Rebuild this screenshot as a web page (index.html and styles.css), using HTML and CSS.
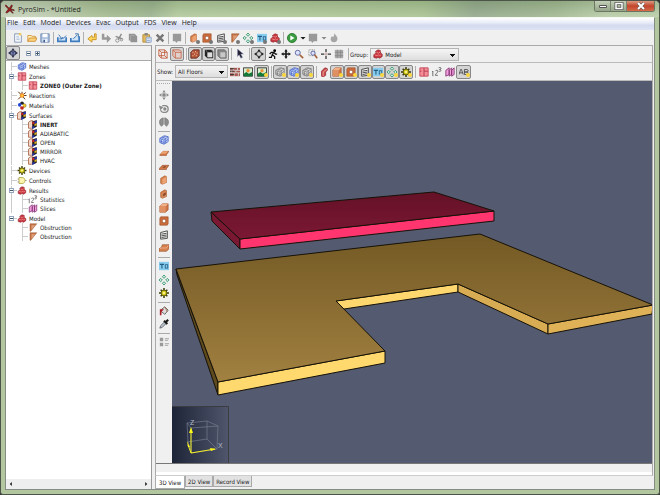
FILE: index.html
```html
<!DOCTYPE html>
<html lang="en">
<head>
  <meta charset="UTF-8" />
  <title>PyroSim - *Untitled</title>
  <meta name="viewport" content="width=device-width, initial-scale=1.0" />
  <link rel="stylesheet" href="styles.css">
</head>
<body>

<!-- Icon set -->
<svg class="icon-defs" aria-hidden="true">
  <symbol id="new" viewBox="0 0 12 12"><path d="M2 1h6l2 2v8H2z" fill="#fdfdfd" stroke="#7389ad"/><path d="M4 4h3M4 6h4M4 8h4" stroke="#9fb4d4"/><path d="M7 0h3v3H7z" fill="#f0c860"/></symbol>
  <symbol id="open" viewBox="0 0 12 12"><path d="M1 10V3h4l1 1h4v2" fill="#fff0bd" stroke="#d09030"/><path d="M1 10l2-4h9l-2 4z" fill="#f8d480" stroke="#d08a28"/></symbol>
  <symbol id="save" viewBox="0 0 12 12"><path d="M1 1h10v10H1z" fill="#a9bfdf" stroke="#6580a8"/><path d="M3 1h6v4H3z" fill="#fff"/><path d="M3 7h6v4H3z" fill="#e8eef8"/><path d="M4 8h2v3H4z" fill="#3d6091"/></symbol>
  <symbol id="import" viewBox="0 0 12 12"><path d="M1 5v5h10V5" fill="#cfe3f7" stroke="#3f7cbd" stroke-width="2"/><path d="M2 2l4 5 1-2M6 7H3M7 7l4-4" stroke="#2563a8" fill="none"/></symbol>
  <symbol id="export" viewBox="0 0 12 12"><path d="M1 6v4h10V4" fill="#cfe3f7" stroke="#3f7cbd" stroke-width="2"/><path d="M4 7l5-5M6 1h4v4" stroke="#2563a8" fill="none"/></symbol>
  <symbol id="undo" viewBox="0 0 12 12"><path d="M1 7l5-4v2h3V1h2v7H6v3z" fill="#ffd75e" stroke="#c48a18"/></symbol>
  <symbol id="redo" viewBox="0 0 12 12"><path d="M12 7L7 2v3H4V1H1v7h6v4z" fill="#999"/></symbol>
  <symbol id="cut" viewBox="0 0 12 12"><path d="M9 1L5 8M2 4l8 3" stroke="#888" stroke-width="1.5"/><circle cx="4" cy="9" r="2" fill="none" stroke="#888"/><circle cx="9" cy="8" r="1.5" fill="none" stroke="#888"/></symbol>
  <symbol id="copy" viewBox="0 0 12 12"><path d="M1 1h7l3 3v7H3V9H1z" fill="#939393"/><path d="M3 9V3h5" fill="none" stroke="#aaa"/></symbol>
  <symbol id="paste" viewBox="0 0 12 12"><path d="M1 2h8v9H1z" fill="#e4b95e" stroke="#b78a36"/><path d="M3 0h4v3H3z" fill="#888"/><path d="M5 5h6v6H5z" fill="#eef4ff" stroke="#7d98c0"/><path d="M6 7h4M6 9h4" stroke="#8da8d0"/></symbol>
  <symbol id="delete" viewBox="0 0 12 12"><path d="M2 2l8 8M10 2l-8 8" stroke="#777" stroke-width="3"/></symbol>
  <symbol id="block" viewBox="0 0 12 12"><path d="M1 1h10v9H7l-2 2-1-2H1z" fill="#999"/></symbol>
  <symbol id="wall" viewBox="0 0 12 12"><path d="M2 4l5-3 2 1v7l-5 2-2-1z" fill="#d98250" stroke="#9d4f25" stroke-width=".7"/><path d="M4 5l5-3v7l-5 2z" fill="#eba274"/></symbol>
  <symbol id="wallhole" viewBox="0 0 12 12"><path d="M2 4l5-3 2 1v7l-5 2-2-1z" fill="#d98250" stroke="#9d4f25" stroke-width=".7"/><path d="M4 5l5-3v7l-5 2z" fill="#d08860"/><path d="M5 6l3-2v3L5 9z" fill="#8a4420"/></symbol>
  <symbol id="hole" viewBox="0 0 12 12"><path d="M1 3l1-2h9v8l-1 2H1z" fill="#cd6c3c" stroke="#944820" stroke-width=".7"/><path d="M4 4h4v4H4z" fill="#fff" stroke="#8a3f1b" stroke-width=".7"/></symbol>
  <symbol id="vent" viewBox="0 0 12 12"><path d="M2 3l8-2v9l-8 1z" fill="#f6f6f6" stroke="#333"/><path d="M3 5l6-1M3 7l6-1M3 9l6-1" stroke="#333"/></symbol>
  <symbol id="slope" viewBox="0 0 12 12"><path d="M2 1h9L3 11H2z" fill="#c87545" stroke="#8e4c28" stroke-width=".6"/><path d="M4 3h5L4 9z" fill="#dda07b"/></symbol>
  <symbol id="diamonds" viewBox="0 0 12 12"><g fill="#c8eadb" stroke="#33906a"><path d="M6 0l2 2-2 2-2-2zM6 8l2 2-2 2-2-2zM2 4l2 2-2 2-2-2zM10 4l2 2-2 2-2-2z"/></g></symbol>
  <symbol id="temp" viewBox="0 0 12 12"><path d="M0 1h12v10H0z" fill="#86cdf0"/><path d="M1 4h5M3.500 4v5" stroke="#245b80" stroke-width="1.300"/><rect x="7.500" y="4.500" width="3" height="4" fill="none" stroke="#245b80"/></symbol>
  <symbol id="blocks" viewBox="0 0 12 12"><path d="M1 7l2-2h1l-1-2 3-2 3 1v3l2 1v3l-3 2-2-1-2 1-3-1z" fill="#c93740" stroke="#8b1c25" stroke-width=".8"/><path d="M4 4l3 1 2-2M2 7l3 1 2-1 1 1 2-1" stroke="#ef8d8d" fill="none"/></symbol>
  <symbol id="snap" viewBox="0 0 12 12"><path d="M3 5l4-4 3 1v2L8 6v4l-3 2-2-1z" fill="#c94a4a" stroke="#8b1c25" stroke-width=".8"/><path d="M5 6l4-3M5 6v5" stroke="#f0b0a8" fill="none"/></symbol>
  <symbol id="play" viewBox="0 0 12 12"><circle cx="6" cy="6" r="5.500" fill="#3b9c40" stroke="#27752d"/><path d="M4 3l5 3-5 3z" fill="#fff"/></symbol>
  <symbol id="flame" viewBox="0 0 12 12"><path d="M7 0c0 3 4 4 3 8-1 4-7 4-8 0 0-2 1-4 2-4l1 1c1-1 1-3 2-5z" fill="#a5a5a5"/></symbol>
  <symbol id="wire" viewBox="0 0 12 12"><path d="M1 1h7v7H1zM4 4h7v7H4zM1 1l3 3M8 1l3 3M1 8l3 3M8 8l3 3" fill="none" stroke="#bf5535"/></symbol>
  <symbol id="cube" viewBox="0 0 12 12"><path d="M1 1h8l2 2v8H4L1 8z" fill="#e0d0ca" stroke="#c66346"/><path d="M4 4h7M4 4v7M1 1l3 3" stroke="#c66346"/></symbol>
  <symbol id="texture" viewBox="0 0 12 12"><path d="M1 4l3-3h7v7l-3 3H1z" fill="#b55439" stroke="#5b2a20"/><path d="M3 4h1M6 3h1M5 6h1M8 5h1M3 8h1M7 8h1" stroke="#efc2a8" stroke-width="1.500"/></symbol>
  <symbol id="darkcube" viewBox="0 0 12 12"><path d="M1 1h8l2 2v8H4L1 8z" fill="#222"/><path d="M4 4h6v6H4z" fill="#ddd"/><path d="M2 1l2 3M9 1l2 3" stroke="#777"/></symbol>
  <symbol id="graycube" viewBox="0 0 12 12"><path d="M1 1h8l2 2v8H4L1 8z" fill="#888" stroke="#666"/><path d="M4 4h6v6H4z" fill="#c8c8c8"/></symbol>
  <symbol id="cursor" viewBox="0 0 12 12"><path d="M3 0v9l2-2 2 4 2-1-2-4h3z" fill="#223" stroke="#8d93b5" stroke-width=".6"/></symbol>
  <symbol id="orbit" viewBox="0 0 12 12"><path d="M6 0l2 3H4zM6 12l2-3H4zM0 6l3-2v4zM12 6L9 4v4z" fill="#222"/><circle cx="6" cy="6" r="3" fill="none" stroke="#222"/></symbol>
  <symbol id="locate" viewBox="0 0 12 12"><path d="M6 0l2 3H4zM6 12l2-3H4zM0 6l3-2v4zM12 6L9 4v4z" fill="#2e3350"/><path d="M3 4l3-1 3 1v4L6 9 3 8z" fill="#7d86b8" stroke="#2e3350"/><path d="M3 4l3 1 3-1M6 5v4" fill="none" stroke="#2e3350"/></symbol>
  <symbol id="walk" viewBox="0 0 12 12"><circle cx="8" cy="2" r="1.700"/><path d="M7 4L5 7l3 2v3M5 7l-1 3H1M2 6l2-2h3l2 2h2" fill="none" stroke="#111" stroke-width="1.500"/></symbol>
  <symbol id="pan" viewBox="0 0 12 12"><path d="M6 0l2 3H7v2h2V4l3 2-3 2V7H7v2h1l-2 3-2-3h1V7H3v1L0 6l3-2v1h2V3H4z" fill="currentColor"/></symbol>
  <symbol id="move" viewBox="0 0 12 12"><path d="M6 0l2 3H4zM6 12l2-3H4zM0 6l3-2v4zM12 6L9 4v4z" fill="#888"/><path d="M4 4h4v4H4z" fill="#888"/></symbol>
  <symbol id="zoom" viewBox="0 0 12 12"><circle cx="4.500" cy="4.500" r="3" fill="#dce4ff" stroke="#4c5790"/><path d="M7 7l4 4" stroke="#a8643d" stroke-width="2"/></symbol>
  <symbol id="zoombox" viewBox="0 0 12 12"><path d="M1 1h7v7H1z" fill="none" stroke="#777" stroke-dasharray="1 1"/><circle cx="6" cy="5" r="2.500" fill="#dce4ff" stroke="#4c5790"/><path d="M8 7l3 4" stroke="#a8643d" stroke-width="2"/></symbol>
  <symbol id="center" viewBox="0 0 12 12"><path d="M6 0v4M6 8v4M0 6h4M8 6h4" stroke="#333" stroke-width="1.500"/><circle cx="6" cy="6" r="1" fill="#b65"/></symbol>
  <symbol id="gridoff" viewBox="0 0 12 12"><path d="M1 1h10v10H1z" fill="#aaa"/><path d="M1 4h10M1 8h10M4 1v10M8 1v10" stroke="#888"/></symbol>
  <symbol id="mesh" viewBox="0 0 12 12"><path d="M1 4l5-3 5 1v6l-5 3-5-2z" fill="#c7d4fb" stroke="#4867c5"/><path d="M1 4l5 2 5-4M6 6v5M3 3l5 1v6M3 5v5M1 7l5 2 5-4M8 1L4 4" fill="none" stroke="#4867c5" stroke-width=".8"/></symbol>
  <symbol id="graymesh" viewBox="0 0 12 12"><path d="M1 4l5-3 5 1v6l-5 3-5-2z" fill="#ddd" stroke="#777"/><path d="M1 4l5 2 5-4M6 6v5M3 3l5 1v6M3 5v5M1 7l5 2 5-4M8 1L4 4" fill="none" stroke="#777" stroke-width=".8"/></symbol>
  <symbol id="slab" viewBox="0 0 12 12"><path d="M1 8l4-4h7L9 8v1H1z" fill="#d0753f" stroke="#944c25" stroke-width=".6"/><path d="M2 7l3-3h6L8 7z" fill="#eda677"/></symbol>
  <symbol id="slabhole" viewBox="0 0 12 12"><path d="M0 8l4-4h8L9 8v1H0z" fill="#cf784a" stroke="#944c25" stroke-width=".7"/><path d="M4 7l2-2h3L7 7z" fill="#8a4a28"/></symbol>
  <symbol id="box" viewBox="0 0 12 12"><path d="M1 4l3-3h7v7l-3 3H1z" fill="#cf7546" stroke="#934c27" stroke-width=".7"/><path d="M1 4h7v7H1z" fill="#e09163"/><path d="M1 4l3-3h7L8 4z" fill="#f2b188"/></symbol>
  <symbol id="stairs" viewBox="0 0 12 12"><path d="M0 7l3-2 1-3h8v5l-3 3H0z" fill="#d4804f" stroke="#934c27" stroke-width=".7"/><path d="M1 7l2-1h6l2-3" stroke="#f2b58e" fill="none"/></symbol>
  <symbol id="zone" viewBox="0 0 12 12"><path d="M1 1h10v10H1z" fill="#f58e99" stroke="#bf4051"/><path d="M6 1v10M6 5h5M1 5h2" stroke="#a93041"/></symbol>
  <symbol id="reaction" viewBox="0 0 12 12"><path d="M6 6L1 1M6 6l5-4M6 6l-5 5M6 6l4 5M6 6h6M6 6V1" stroke="#5a2d16" stroke-width="1.300"/><circle cx="6" cy="6" r="3" fill="#f3922b"/><circle cx="6" cy="6" r="1.500" fill="#ffcb4a"/></symbol>
  <symbol id="material" viewBox="0 0 12 12"><circle cx="6" cy="3" r="2.500" fill="#222"/><circle cx="3" cy="5" r="2.500" fill="#2548d4"/><circle cx="9" cy="6" r="2.500" fill="#f1ca27" stroke="#333" stroke-width=".5"/><circle cx="6" cy="9" r="2.500" fill="#c62920"/><circle cx="6" cy="6" r="1.300" fill="#fff"/></symbol>
  <symbol id="surface" viewBox="0 0 12 12"><path d="M0 3l3-2h3v9l-2 1H0z" fill="#f1d8c8" stroke="#a45335"/><path d="M5 2l6-2v9l-6 3z" fill="#222"/><path d="M5 3l3-1v3L5 6z" fill="#c92222"/><path d="M8 5l3-1v3L8 8z" fill="#e1b41b"/><path d="M8 2l3-1v3L8 5z" fill="#2435ba"/><path d="M5 9l3-1v2l-3 2z" fill="#2435ba"/></symbol>
  <symbol id="gear" viewBox="0 0 12 12"><path d="M6 0v12M0 6h12M2 2l8 8M10 2l-8 8" stroke="#3b3b08" stroke-width="1.800"/><circle cx="6" cy="6" r="3.500" fill="#d3c81a" stroke="#4c480c"/><circle cx="6" cy="6" r="1.300" fill="#fffbb0"/></symbol>
  <symbol id="gate" viewBox="0 0 12 12"><path d="M0 4h2M0 8h2M10 6h2" stroke="#777"/><path d="M2 2h4c3 0 4 2 4 4s-1 4-4 4H2z" fill="#fbf5b0" stroke="#aa9c3a"/></symbol>
  <symbol id="stats" viewBox="0 0 12 12"><path d="M0 6l1-1v6M4 5c1-2 3-1 3 0 0 2-3 3-3 5h3M8 1c2-1 3 0 3 1L9 3c3 0 2 3-1 2" fill="none" stroke="#555"/></symbol>
  <symbol id="slice" viewBox="0 0 12 12"><path d="M1 4l4-3v8l-4 2zM5 4l3-3v8l-3 2zM8 4l3-3v8l-3 2z" fill="#f0a0dd" stroke="#823070"/></symbol>
  <symbol id="bricks" viewBox="0 0 12 12"><path d="M0 1h12v10H0z" fill="#a85a50"/><path d="M0 4h12M0 7h12M4 1v3M9 1v3M2 4v3M7 4v3M5 7v4M10 7v4" stroke="#ddd"/><path d="M0 2h5M0 5h5M0 9h5" stroke="#333"/></symbol>
  <symbol id="image" viewBox="0 0 12 12"><path d="M.5 1h11v10H.5z" fill="#d9f0cc" stroke="#222"/><path d="M1 8l3-2 3 2 4-2v5H1z" fill="#157a35"/><circle cx="6" cy="4.500" r="2" fill="#ee8e35"/></symbol>
  <symbol id="label" viewBox="0 0 12 12"><path d="M0 9l2-6h1l2 6M1 7h3M6.500 3v6h3c2 0 2-3 0-3h-3 3c2 0 2-3 0-3z" fill="none" stroke="#444"/></symbol>
  <symbol id="turn" viewBox="0 0 12 12"><path d="M1 3l3 1-2 2zM4 2h4c4 1 4 7 0 8H5c-4-1-3-4-2-5" fill="none" stroke="#888" stroke-width="1.500"/><circle cx="7" cy="6" r="2" fill="#888"/></symbol>
  <symbol id="mirror" viewBox="0 0 12 12"><path d="M5 1v8l-2 2C0 9 0 3 3 2zM7 1v8l2 2c3-2 3-8 0-9z" fill="#909090" stroke="#777"/></symbol>
  <symbol id="paint" viewBox="0 0 12 12"><path d="M3 4l4-3 4 4-4 5-5-4z" fill="#ddd" stroke="#555"/><path d="M1 4h5l-3 3v4H1z" fill="#a82024"/><path d="M7 1l3 6" stroke="#9b6a45"/></symbol>
  <symbol id="dropper" viewBox="0 0 12 12"><path d="M1 11l1-3 5-5 2 2-5 5z" fill="#b8c4d4" stroke="#444" stroke-width=".8"/><path d="M6 2l4 4M8 4l3-3" stroke="#171717" stroke-width="2.500"/></symbol>
  <symbol id="list" viewBox="0 0 12 12"><path d="M1 1h4v4H1zM1 7h4v4H1z" fill="#999"/><path d="M7 2h5M7 4h4M7 8h5M7 10h4" stroke="#999"/></symbol>
  <symbol id="down" viewBox="0 0 12 12"><path d="M1 4h10L6 9z" fill="currentColor"/></symbol>
</svg>

<div class="window">
  <header class="titlebar">
    <svg class="logo" viewBox="0 0 12 12"><path d="M1 1l4 4 3-4 1 1-2 4 4 1v1L7 7l3 4H9L6 8l-4 3-1-1 3-4-4-4z" fill="#9e1c1c" stroke="#3d1212" stroke-width=".6"/></svg>
    <h1>PyroSim - *Untitled</h1>
    <div class="window-buttons">
      <button aria-label="Minimize"><svg viewBox="0 0 12 8"><path d="M2.500 3.500h7v2h-7z" fill="#fff" stroke="#555"/></svg></button>
      <button aria-label="Maximize"><svg viewBox="0 0 12 8"><path d="M3 1.500h6v5H3z" fill="none" stroke="#555" stroke-width="3"/><path d="M3 1.500h6v5H3z" fill="none" stroke="#fff" stroke-width="1.500"/></svg></button>
      <button class="close" aria-label="Close"><svg viewBox="0 0 12 8"><path d="M3 1l6 6M9 1L3 7" stroke="#555" stroke-width="3"/><path d="M3 1l6 6M9 1L3 7" stroke="#fff" stroke-width="2"/></svg></button>
    </div>
  </header>

  <div class="client">
    <nav class="menubar">
      <button>File</button><button>Edit</button><button>Model</button><button>Devices</button><button>Evac</button><button>Output</button><button>FDS</button><button>View</button><button>Help</button>
    </nav>

    <div class="toolbar main-tools">
      <div class="group n3">
        <button aria-label="New"><svg><use href="#new"/></svg></button>
        <button aria-label="Open"><svg><use href="#open"/></svg></button>
        <button aria-label="Save"><svg><use href="#save"/></svg></button>
      </div>
      <i class="sep"></i>
      <div class="group n2">
        <button aria-label="Import"><svg><use href="#import"/></svg></button>
        <button aria-label="Export"><svg><use href="#export"/></svg></button>
      </div>
      <i class="sep"></i>
      <div class="group n6">
        <button aria-label="Undo"><svg><use href="#undo"/></svg></button>
        <button aria-label="Redo"><svg><use href="#redo"/></svg></button>
        <button aria-label="Cut"><svg><use href="#cut"/></svg></button>
        <button aria-label="Copy"><svg><use href="#copy"/></svg></button>
        <button aria-label="Paste"><svg><use href="#paste"/></svg></button>
        <button aria-label="Delete"><svg><use href="#delete"/></svg></button>
      </div>
      <i class="sep"></i>
      <div class="group n1">
        <button aria-label="Edit properties"><svg><use href="#block"/></svg></button>
      </div>
      <i class="sep"></i>
      <div class="group n7">
        <button class="add" aria-label="New obstruction"><svg><use href="#wall"/></svg></button>
        <button class="add" aria-label="New hole"><svg><use href="#hole"/></svg></button>
        <button class="add" aria-label="New vent"><svg><use href="#vent"/></svg></button>
        <button class="add" aria-label="New slab"><svg><use href="#slope"/></svg></button>
        <button class="add" aria-label="New particle cloud"><svg><use href="#diamonds"/></svg></button>
        <button class="add" aria-label="New initial region"><svg><use href="#temp"/></svg></button>
        <button class="add" aria-label="New group"><svg><use href="#blocks"/></svg></button>
      </div>
      <i class="sep"></i>
      <button aria-label="Run FDS"><svg><use href="#play"/></svg></button>
      <button class="arrow" aria-label="Run options"><svg><use href="#down"/></svg></button>
      <button class="off" aria-label="Results"><svg><use href="#block"/></svg></button>
      <button class="arrow off" aria-label="Result options"><svg><use href="#down"/></svg></button>
      <button aria-label="Smokeview"><svg><use href="#flame"/></svg></button>
    </div>

    <div class="workspace">
      <aside class="navigator">
        <div class="navigator-bar">
          <button class="locate" aria-label="Show selection"><svg><use href="#locate"/></svg></button>
          <button class="expander" aria-label="Collapse all"></button>
          <button class="expander plus" aria-label="Expand all"></button>
        </div>
        <ul class="tree">
          <li><div class="node"><svg><use href="#mesh"/></svg>Meshes</div></li>
          <li><div class="node"><button class="expander" aria-label="Collapse Zones"></button><svg><use href="#zone"/></svg>Zones</div>
            <ul>
              <li><div class="node"><svg><use href="#zone"/></svg><b>ZONE0 (Outer Zone)</b></div></li>
            </ul>
          </li>
          <li><div class="node"><svg><use href="#reaction"/></svg>Reactions</div></li>
          <li><div class="node"><svg><use href="#material"/></svg>Materials</div></li>
          <li><div class="node"><button class="expander" aria-label="Collapse Surfaces"></button><svg><use href="#surface"/></svg>Surfaces</div>
            <ul>
              <li><div class="node"><svg><use href="#surface"/></svg><b>INERT</b></div></li>
              <li><div class="node"><svg><use href="#surface"/></svg>ADIABATIC</div></li>
              <li><div class="node"><svg><use href="#surface"/></svg>OPEN</div></li>
              <li><div class="node"><svg><use href="#surface"/></svg>MIRROR</div></li>
              <li><div class="node"><svg><use href="#surface"/></svg>HVAC</div></li>
            </ul>
          </li>
          <li><div class="node"><svg><use href="#gear"/></svg>Devices</div></li>
          <li><div class="node"><svg><use href="#gate"/></svg>Controls</div></li>
          <li><div class="node"><button class="expander" aria-label="Collapse Results"></button><svg><use href="#blocks"/></svg>Results</div>
            <ul>
              <li><div class="node"><svg><use href="#stats"/></svg>Statistics</div></li>
              <li><div class="node"><svg><use href="#slice"/></svg>Slices</div></li>
            </ul>
          </li>
          <li><div class="node"><button class="expander" aria-label="Collapse Model"></button><svg><use href="#blocks"/></svg>Model</div>
            <ul>
              <li><div class="node"><svg><use href="#slope"/></svg>Obstruction</div></li>
              <li><div class="node"><svg><use href="#slope"/></svg>Obstruction</div></li>
            </ul>
          </li>
        </ul>
        <div class="scrollbar">
          <button class="scroll-left" aria-label="Scroll left"><svg><use href="#down"/></svg></button>
          <button class="scroll-right" aria-label="Scroll right"><svg><use href="#down"/></svg></button>
        </div>
      </aside>

      <main class="view">
        <div class="toolbar view-tools">
          <div class="group n2">
            <button aria-label="Wireframe"><svg><use href="#wire"/></svg></button>
            <button class="on" aria-label="Solid"><svg><use href="#cube"/></svg></button>
          </div>
          <i class="sep"></i>
          <div class="group n3">
            <button class="on" aria-label="Textures"><svg><use href="#texture"/></svg></button>
            <button class="on" aria-label="Outlines"><svg><use href="#darkcube"/></svg></button>
            <button class="on" aria-label="Smooth shading"><svg><use href="#graycube"/></svg></button>
          </div>
          <i class="sep"></i>
          <div class="group n1">
            <button aria-label="Select"><svg><use href="#cursor"/></svg></button>
          </div>
          <i class="sep"></i>
          <div class="group n7">
            <button class="on" aria-label="Orbit"><svg><use href="#orbit"/></svg></button>
            <button aria-label="Walk"><svg><use href="#walk"/></svg></button>
            <button aria-label="Pan"><svg><use href="#pan"/></svg></button>
            <button aria-label="Zoom"><svg><use href="#zoom"/></svg></button>
            <button aria-label="Zoom box"><svg><use href="#zoombox"/></svg></button>
            <button aria-label="Reset view"><svg><use href="#center"/></svg></button>
            <button aria-label="Fit selection"><svg><use href="#gridoff"/></svg></button>
          </div>
          <i class="sep"></i>
          <label for="group">Group:</label>
          <div class="picker wide">
            <svg><use href="#blocks"/></svg>
            <select id="group"><option>Model</option></select>
          </div>
        </div>

        <div class="toolbar floor-tools">
          <label for="floor">Show:</label>
          <div class="picker">
            <select id="floor"><option>All Floors</option></select>
          </div>
          <div class="group n3">
            <button aria-label="Edit floors"><svg><use href="#bricks"/></svg></button>
            <button aria-label="Background image"><svg><use href="#image"/></svg></button>
            <button class="on lit" aria-label="Show background images"><svg><use href="#image"/></svg></button>
          </div>
          <i class="sep"></i>
          <div class="group n3">
            <button class="on lit" aria-label="Show mesh grid"><svg><use href="#graymesh"/></svg></button>
            <button class="on lit" aria-label="Show mesh boundary"><svg><use href="#mesh"/></svg></button>
            <button class="on lit" aria-label="Show mesh outline"><svg><use href="#graymesh"/></svg></button>
          </div>
          <i class="sep"></i>
          <div class="group n7">
            <button aria-label="Snap"><svg><use href="#snap"/></svg></button>
            <button class="on lit" aria-label="Show obstructions"><svg><use href="#box"/></svg></button>
            <button class="on lit" aria-label="Show holes"><svg><use href="#hole"/></svg></button>
            <button class="on lit" aria-label="Show vents"><svg><use href="#vent"/></svg></button>
            <button class="on lit" aria-label="Show initial regions"><svg><use href="#temp"/></svg></button>
            <button class="on lit" aria-label="Show particles"><svg><use href="#diamonds"/></svg></button>
            <button class="on lit" aria-label="Show devices"><svg><use href="#gear"/></svg></button>
          </div>
          <i class="sep"></i>
          <div class="group n4">
            <button aria-label="Show zones"><svg><use href="#zone"/></svg></button>
            <button aria-label="Show statistics"><svg><use href="#stats"/></svg></button>
            <button aria-label="Show slices"><svg><use href="#slice"/></svg></button>
            <button class="on lit" aria-label="Show labels"><svg><use href="#label"/></svg></button>
          </div>
        </div>

        <div class="stage">
          <div class="draw-tools">
            <div class="group n3">
              <button aria-label="Move"><svg><use href="#move"/></svg></button>
              <button aria-label="Rotate"><svg><use href="#turn"/></svg></button>
              <button aria-label="Mirror"><svg><use href="#mirror"/></svg></button>
            </div>
            <i class="sep"></i>
            <div class="group n9">
              <button aria-label="Draw mesh"><svg><use href="#mesh"/></svg></button>
              <button aria-label="Draw slab"><svg><use href="#slab"/></svg></button>
              <button aria-label="Draw slab hole"><svg><use href="#slabhole"/></svg></button>
              <button aria-label="Draw wall"><svg><use href="#wall"/></svg></button>
              <button aria-label="Draw wall hole"><svg><use href="#wallhole"/></svg></button>
              <button aria-label="Draw block"><svg><use href="#box"/></svg></button>
              <button aria-label="Draw block hole"><svg><use href="#hole"/></svg></button>
              <button aria-label="Draw vent"><svg><use href="#vent"/></svg></button>
              <button aria-label="Draw room"><svg><use href="#stairs"/></svg></button>
            </div>
            <i class="sep"></i>
            <div class="group n3">
              <button aria-label="Draw initial region"><svg><use href="#temp"/></svg></button>
              <button aria-label="Draw particles"><svg><use href="#diamonds"/></svg></button>
              <button aria-label="Draw device"><svg><use href="#gear"/></svg></button>
            </div>
            <i class="sep"></i>
            <div class="group n2">
              <button aria-label="Paint"><svg><use href="#paint"/></svg></button>
              <button aria-label="Pick color"><svg><use href="#dropper"/></svg></button>
            </div>
            <i class="sep"></i>
            <div class="group n1">
              <button aria-label="Tool properties"><svg><use href="#list"/></svg></button>
            </div>
          </div>

          <svg class="scene" viewBox="172 81 481 382" preserveAspectRatio="xMinYMax slice" role="img" aria-label="3D model">
            <defs>
              <linearGradient id="redTop" x1="0" y1="1" x2="0" y2="0"><stop offset="0" stop-color="#7c1834"/><stop offset="1" stop-color="#641126"/></linearGradient>
              <linearGradient id="tanTop" x1="0" y1="1" x2="0" y2="0"><stop offset="0" stop-color="#a28141"/><stop offset="1" stop-color="#735924"/></linearGradient>
              <linearGradient id="axisBg"><stop offset="0" stop-color="#1e2438"/><stop offset="1" stop-color="#50566b"/></linearGradient>
            </defs>
            <g stroke="#161208" stroke-width="1" stroke-linejoin="round">
              <path d="M176 269L218 382v13L177 275z" fill="#5f4a1e"/>
              <path d="M336 301L458 284v8L344 309z" fill="#ffd76f"/>
              <path d="M458 284L548 324v10L458 292z" fill="#d8ac52"/>
              <path d="M548 324L653 305l-1 9-104 20z" fill="#dfb257"/>
              <path d="M218 382L385 351v12L218 395z" fill="#ffd96e"/>
              <path d="M176 269L480 234 653 305 548 324 458 284 336 301 385 351 218 382z" fill="url(#tanTop)"/>
              <path d="M211 212L240 239v10L212 221z" fill="#7a1733"/>
              <path d="M240 239L494 211v10L240 249z" fill="#ff356f"/>
              <path d="M211 212L434 192 494 211 240 239z" fill="url(#redTop)"/>
            </g>
            <!-- axis indicator -->
            <path d="M172 407h57v56h-57z" fill="url(#axisBg)"/>
            <path d="M172 406.500h56.500V463" fill="none" stroke="#3c3c40"/>
            <path d="M187 423l20-2 11 5-1 23-26 4-3-12zM187 423l4 5 27-2M191 428v25M207 421v18l10 10M207 439l-20 3" fill="none" stroke="#747b8d" stroke-width=".7"/>
            <path d="M191 453V430M191 453l24-4M191 453l-3-8" stroke="#f2ee20" fill="none"/>
            <path d="M191 427l2 6h-4zM216 449l-6-1 1 3zM187 441l3 6h-2z" fill="#fff81c"/>
            <text x="190" y="425" class="axis">Z</text>
            <text x="218" y="448" class="axis">X</text>
          </svg>
        </div>

        <div class="status"></div>
      </main>
      <div class="tabs">
        <button class="active">3D View</button><button>2D View</button><button>Record View</button>
      </div>
    </div>
  </div>
</div>

</body>
</html>
```
FILE: styles.css
```css
* {
  box-sizing: border-box;
}

body {
  margin: 0;
  background: #333;
  font-family: "Open Sans", "Noto Sans", sans-serif;
  font-size: 7px;
  line-height: 9px;
  color: #1a1a1a;
}

button {
  margin: 0;
  padding: 0;
  border: 0;
  background: none;
  font: inherit;
  color: inherit;
}

button svg {
  display: block;
}

.icon-defs {
  display: none;
}

.window {
  height: 100vh;
  display: flex;
  flex-direction: column;
  padding: 0 4px 4px;
  border: 1px solid #4c5548;
  border-radius: 5px 5px 3px 3px;
  background: #b2c6a0;
}

/* Title bar */
.titlebar {
  flex: 0 0 16px;
  display: flex;
  align-items: center;
  gap: 3px;
  margin: 0 -4px;
  border-radius: 4px 4px 0 0;
  background: linear-gradient(rgba(70, 100, 60, 0.2), rgba(255, 255, 255, 0.1)),
    linear-gradient(100deg, #c3d0b6 5%, #a5bb90 16%, #9bb28e 23%, #b2c99c 27%, #aac393 64%, #94a98c 72%, #a1b791 84%, #b9cda8 92%);
  padding: 0 4px;
}

.logo {
  width: 10px;
  height: 10px;
}

.titlebar h1 {
  margin: 0;
  font-size: 7px;
  font-weight: 400;
}

.window-buttons {
  align-self: flex-start;
  display: flex;
  margin-left: auto;
  border: 1px solid #6b7663;
  border-top: 0;
  border-radius: 0 0 3px 3px;
  overflow: hidden;
}

.window-buttons button {
  width: 16px;
  height: 10px;
  border-right: 1px solid #7a8672;
  background: linear-gradient(#c3cfb8, #95a588);
}

.window-buttons svg {
  width: 12px;
  height: 8px;
  margin: auto;
}

.window-buttons .close {
  width: 27px;
  border-right: 0;
  background: linear-gradient(#dc9a82, #c2452b 50%, #d66a49);
}

.client {
  flex: 1;
  min-height: 0;
  display: flex;
  flex-direction: column;
  border: 1px solid #858c82;
  border-top-color: #f5f7f2;
  background: #f0f0f0;
}

/* Menu and toolbars */
.menubar {
  display: flex;
  gap: 5px;
  padding: 0 1px 2px;
  background: linear-gradient(#fff, #e8ecf7 40%, #d3daee 60%, #dde3f4);
}

.menubar button {
  line-height: 10px;
}

.toolbar {
  display: flex;
  align-items: center;
  height: 17px;
}

.toolbar button,
.draw-tools button {
  position: relative;
  display: grid;
  place-items: center;
  width: 14px;
  height: 14px;
}

.toolbar svg,
.draw-tools svg {
  width: 10px;
  height: 10px;
}

.main-tools {
  height: 15px;
  padding-left: 5px;
}

.group {
  display: flex;
}

.group button {
  flex: 1;
}

.n1 { width: 14px; }
.n2 { width: 27px; }
.n3 { width: 41px; }
.n4 { width: 54px; }
.n6 { width: 82px; }
.n7 { width: 95px; }

.sep {
  width: 4px;
  height: 12px;
  background: linear-gradient(#b0b0b0, #b0b0b0) center / 1px 100% no-repeat;
}

.main-tools .sep {
  width: 3px;
}

.toolbar .arrow {
  width: 7px;
}

.toolbar .arrow svg {
  width: 6px;
  height: 6px;
}

.off {
  color: #888;
}

.toolbar button.on,
.locate {
  border: 1px solid #888;
  border-radius: 2px;
  background: #d4d4d4;
}

/* small badges on the icon corner */
.add::after,
.lit::after {
  content: "";
  position: absolute;
  right: 1px;
  bottom: 1px;
  width: 4px;
  height: 4px;
  border-radius: 2px;
  background: #777;
}

.lit::after {
  right: 0;
  background: #fbd63c;
}

/* Workspace */
.workspace {
  flex: 1;
  min-height: 0;
  display: grid;
  grid-template-columns: 146px minmax(0, 1fr);
  grid-template-rows: minmax(0, 1fr) 13px;
  column-gap: 3px;
}

.navigator {
  grid-row: 1 / 3;
  display: flex;
  flex-direction: column;
  border-top: 1px solid #aaa;
  border-right: 1px solid #999;
}

.navigator-bar {
  display: flex;
  align-items: center;
  gap: 4px;
  height: 15px;
  border-bottom: 1px solid #aaa;
}

.locate {
  display: grid;
  place-items: center;
  width: 14px;
  height: 14px;
  margin-right: 2px;
}

.locate svg {
  width: 10px;
  height: 10px;
}

.expander {
  width: 5px;
  height: 5px;
  border: 1px solid #93a5bd;
  background: linear-gradient(#456, #456) center / 3px 1px no-repeat #fff;
}

.expander.plus {
  background: linear-gradient(#456, #456) center / 3px 1px no-repeat,
    linear-gradient(#456, #456) center / 1px 3px no-repeat #fff;
}

.tree,
.view,
.tabs {
  font-family: "DejaVu Sans Condensed", "Liberation Sans", sans-serif;
  font-size: 6px;
}

.tree {
  flex: 1;
  overflow: hidden;
  padding: 1px 0 0 5px;
  background: #fff;
}

.tree,
.tree ul {
  margin: 0;
  list-style: none;
}

.tree ul {
  margin-left: 5px;
  padding-left: 6px;
}

.tree > li + li {
  margin-top: 1px;
}

.tree > li:not(:last-child) {
  background: linear-gradient(#ccc, #ccc) 0 0 / 1px 100% no-repeat;
}

.tree ul li {
  background: linear-gradient(#ccc, #ccc) 0 0 / 1px 100% no-repeat;
}

.node {
  display: flex;
  align-items: center;
  height: 9px;
  padding-left: 6px;
  gap: 2px;
  white-space: nowrap;
  background: linear-gradient(#ccc, #ccc) 0 4px / 6px 1px no-repeat;
}

.node svg {
  width: 10px;
  height: 9px;
}

.node .expander {
  margin: 0 1px 0 -8px;
}

.scrollbar {
  display: flex;
  justify-content: space-between;
  padding: 2px 3px;
  height: 10px;
  background: #eee;
}

.scrollbar svg {
  width: 5px;
  height: 5px;
}

.scroll-left {
  transform: rotate(90deg);
}

.scroll-right {
  transform: rotate(-90deg);
}

.view {
  display: flex;
  flex-direction: column;
  min-width: 0;
  margin-right: 1px;
  border: 1px solid #aaa;
  border-bottom-color: #ccc;
}

.view-tools,
.floor-tools {
  padding-left: 1px;
  border-bottom: 1px solid #bbb;
}

.floor-tools {
  height: 18px;
}

.picker {
  display: flex;
  align-items: center;
  width: 53px;
  height: 13px;
  margin-left: 2px;
  padding-left: 2px;
  border: 1px solid #b5b5b5;
  background: linear-gradient(#f5f5f5, #dedede);
}

.picker.wide {
  width: 89px;
}

.picker select {
  flex: 1;
  min-width: 0;
  height: 11px;
  padding: 0;
  border: 0;
  appearance: none;
  background: linear-gradient(#111, #111) right 3px top 5px / 5px 1px no-repeat,
    linear-gradient(#111, #111) right 4px top 6px / 3px 1px no-repeat,
    linear-gradient(#111, #111) right 5px top 7px / 1px 1px no-repeat;
  font: inherit;
  color: inherit;
}

.wide select {
  margin-left: 2px;
}

.stage {
  flex: 1;
  min-height: 0;
  display: flex;
}

.draw-tools {
  flex: 0 0 16px;
  display: flex;
  flex-direction: column;
  align-items: center;
  padding-top: 7px;
  background: repeating-linear-gradient(90deg, #aaa 0 1px, transparent 1px 2px) 1px 2px / 14px 1px no-repeat;
}

.draw-tools .group {
  flex-direction: column;
  width: 14px;
}

.draw-tools .n1 { height: 14px; }
.draw-tools .n2 { height: 27px; }
.draw-tools .n3 { height: 41px; }
.draw-tools .n9 { height: 122px; }

.draw-tools .group button {
  min-height: 0;
}

.draw-tools .sep {
  width: 12px;
  height: 4px;
  background: linear-gradient(#aaa, #aaa) center / 100% 1px no-repeat;
}

.scene {
  flex: 1;
  min-width: 0;
  height: 100%;
  background: #545a6f;
}

.axis {
  fill: #b4bac8;
  font-family: "Liberation Sans", sans-serif;
  font-size: 7px;
}

.status {
  height: 12px;
  border-top: 1px solid #777;
  border-bottom: 3px solid #fff;
}

.tabs {
  display: flex;
  align-items: flex-start;
}

.tabs button {
  height: 11px;
  padding: 0 2px;
  border: 1px solid #aaa;
  border-top: 0;
  background: #e2e2e2;
}

.tabs .active {
  height: 13px;
  padding: 0 3px;
  background: #fff;
}
```
